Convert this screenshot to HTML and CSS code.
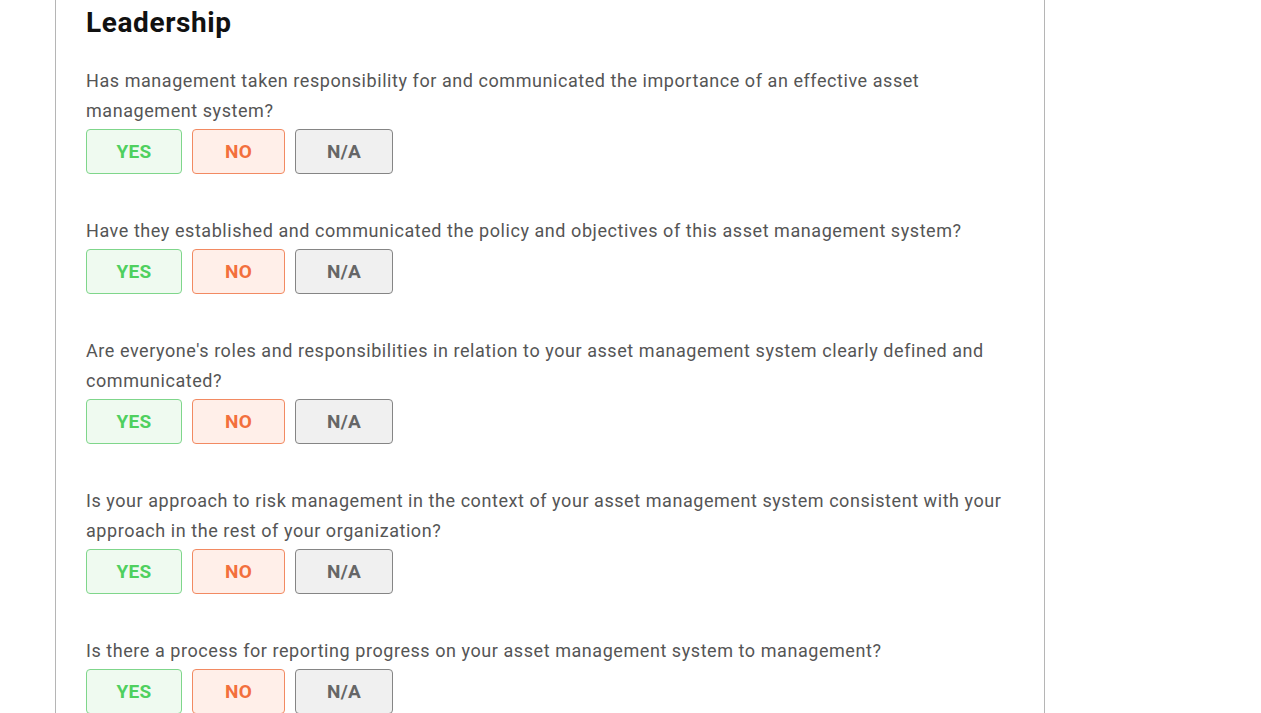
FILE: index.html
```html
<!DOCTYPE html>
<html>
<head>
<meta charset="utf-8">
<link rel="stylesheet" href="styles.css">
</head>
<body>
<div class="panel">
  <h2 class="title">Leadership</h2>
  <div class="q">
    <p class="q-text">Has management taken responsibility for and communicated the importance of an effective asset management system?</p>
    <div class="answers"><button class="btn yes">YES</button><button class="btn no">NO</button><button class="btn na">N/A</button></div>
  </div>
  <div class="q">
    <p class="q-text">Have they established and communicated the policy and objectives of this asset management system?</p>
    <div class="answers"><button class="btn yes">YES</button><button class="btn no">NO</button><button class="btn na">N/A</button></div>
  </div>
  <div class="q">
    <p class="q-text">Are everyone's roles and responsibilities in relation to your asset management system clearly defined and communicated?</p>
    <div class="answers"><button class="btn yes">YES</button><button class="btn no">NO</button><button class="btn na">N/A</button></div>
  </div>
  <div class="q">
    <p class="q-text">Is your approach to risk management in the context of your asset management system consistent with your approach in the rest of your organization?</p>
    <div class="answers"><button class="btn yes">YES</button><button class="btn no">NO</button><button class="btn na">N/A</button></div>
  </div>
  <div class="q">
    <p class="q-text">Is there a process for reporting progress on your asset management system to management?</p>
    <div class="answers"><button class="btn yes">YES</button><button class="btn no">NO</button><button class="btn na">N/A</button></div>
  </div>
</div>
</body>
</html>
```
FILE: styles.css
```css
html, body { margin: 0; padding: 0; background: #fff; }
body { font-family: Roboto, "Liberation Sans", sans-serif; }
.panel {
  margin-left: 55px;
  width: 928px;
  padding: 0 30px 40px 30px;
  border-left: 1px solid #b5b5b5;
  border-right: 1px solid #b5b5b5;
  min-height: 800px;
}
.title {
  margin: 0;
  padding-top: 5px;
  font-size: 28px;
  line-height: 36px;
  font-weight: 700;
  letter-spacing: 0.6px;
  color: #111;
}
.q { margin-top: 25px; }
.q + .q { margin-top: 42px; }
.q-text {
  margin: 0;
  font-size: 18px;
  line-height: 30px;
  letter-spacing: 0.56px;
  color: #555;
}
.answers { display: flex; gap: 10px; margin-top: 3px; }
.btn {
  height: 45px;
  border-radius: 4px;
  font-family: Roboto, "Liberation Sans", sans-serif;
  font-weight: 700;
  font-size: 19px;
  letter-spacing: 0.3px;
  padding: 0;
  cursor: pointer;
}
.yes { width: 96px; background: #effaf0; border: 1px solid #7fd68b; color: #4fd05f; }
.no { width: 93px; background: #ffefe9; border: 1px solid #f28a62; color: #f3703d; }
.na { width: 98px; background: #f0f0f0; border: 1px solid #858585; color: #666; }
```
